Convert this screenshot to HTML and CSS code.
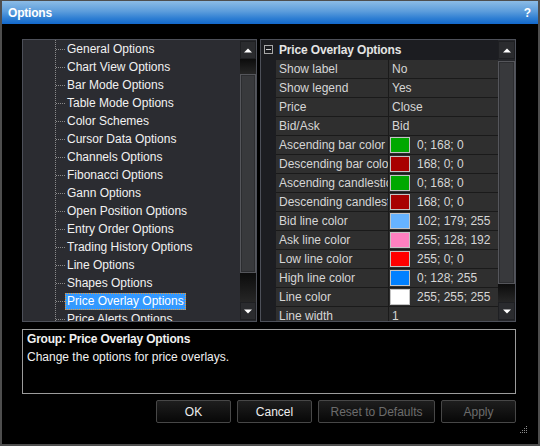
FILE: index.html
```html
<!DOCTYPE html>
<html>
<head>
<meta charset="utf-8">
<link rel="stylesheet" href="styles.css">
</head>
<body>
<div class="window">
  <div class="titlebar">
    <span class="title">Options</span>
    <span class="help">?</span>
  </div>
  <div class="content">
    <div class="panels">
      <div class="tree-panel">
        <div class="tree">
          <div class="item"><span class="label">General Options</span></div>
          <div class="item"><span class="label">Chart View Options</span></div>
          <div class="item"><span class="label">Bar Mode Options</span></div>
          <div class="item"><span class="label">Table Mode Options</span></div>
          <div class="item"><span class="label">Color Schemes</span></div>
          <div class="item"><span class="label">Cursor Data Options</span></div>
          <div class="item"><span class="label">Channels Options</span></div>
          <div class="item"><span class="label">Fibonacci Options</span></div>
          <div class="item"><span class="label">Gann Options</span></div>
          <div class="item"><span class="label">Open Position Options</span></div>
          <div class="item"><span class="label">Entry Order Options</span></div>
          <div class="item"><span class="label">Trading History Options</span></div>
          <div class="item"><span class="label">Line Options</span></div>
          <div class="item"><span class="label">Shapes Options</span></div>
          <div class="item selected"><span class="label">Price Overlay Options</span></div>
          <div class="item"><span class="label">Price Alerts Options</span></div>
        </div>
        <div class="vscroll vs-left">
          <div class="sbtn"><svg width="8" height="5" viewBox="0 0 8 5"><path d="M0 4.5 L4 0.5 L8 4.5 Z" fill="#fff"/></svg></div>
          <div class="track t1"></div>
          <div class="thumb"></div>
          <div class="track t2"></div>
          <div class="sbtn"><svg width="8" height="5" viewBox="0 0 8 5"><path d="M0 0.5 L4 4.5 L8 0.5 Z" fill="#fff"/></svg></div>
        </div>
      </div>
      <div class="grid-panel">
        <div class="grid">
          <div class="ghead">
            <span class="collapse"></span>
            <span class="ghead-text">Price Overlay Options</span>
          </div>
          <div class="row"><div class="name">Show label</div><div class="value">No</div></div>
          <div class="row"><div class="name">Show legend</div><div class="value">Yes</div></div>
          <div class="row"><div class="name">Price</div><div class="value">Close</div></div>
          <div class="row"><div class="name">Bid/Ask</div><div class="value">Bid</div></div>
          <div class="row"><div class="name">Ascending bar color</div><div class="value"><span class="swatch c-green"></span>0; 168; 0</div></div>
          <div class="row"><div class="name">Descending bar color</div><div class="value"><span class="swatch c-red"></span>168; 0; 0</div></div>
          <div class="row"><div class="name">Ascending candlestick color</div><div class="value"><span class="swatch c-green"></span>0; 168; 0</div></div>
          <div class="row"><div class="name">Descending candlestick color</div><div class="value"><span class="swatch c-red"></span>168; 0; 0</div></div>
          <div class="row"><div class="name">Bid line color</div><div class="value"><span class="swatch c-lblue"></span>102; 179; 255</div></div>
          <div class="row"><div class="name">Ask line color</div><div class="value"><span class="swatch c-pink"></span>255; 128; 192</div></div>
          <div class="row"><div class="name">Low line color</div><div class="value"><span class="swatch c-bred"></span>255; 0; 0</div></div>
          <div class="row"><div class="name">High line color</div><div class="value"><span class="swatch c-blue"></span>0; 128; 255</div></div>
          <div class="row"><div class="name">Line color</div><div class="value"><span class="swatch c-white"></span>255; 255; 255</div></div>
          <div class="row"><div class="name">Line width</div><div class="value">1</div></div>
        </div>
        <div class="vscroll vs-right">
          <div class="sbtn"><svg width="8" height="5" viewBox="0 0 8 5"><path d="M0 4.5 L4 0.5 L8 4.5 Z" fill="#fff"/></svg></div>
          <div class="track t1"></div>
          <div class="thumb"></div>
          <div class="track t2"></div>
          <div class="sbtn"><svg width="8" height="5" viewBox="0 0 8 5"><path d="M0 0.5 L4 4.5 L8 0.5 Z" fill="#fff"/></svg></div>
        </div>
      </div>
    </div>
    <div class="desc">
      <div class="desc-title">Group: Price Overlay Options</div>
      <div class="desc-text">Change the options for price overlays.</div>
    </div>
    <div class="buttons">
      <button class="btn w-std">OK</button>
      <button class="btn w-std">Cancel</button>
      <button class="btn w-wide disabled">Reset to Defaults</button>
      <button class="btn w-std disabled">Apply</button>
    </div>
  </div>
  <svg class="grip" width="8" height="8" viewBox="0 0 8 8">
    <g fill="#8a8a8a">
      <rect x="6" y="0" width="1" height="1"/>
      <rect x="4" y="2" width="1" height="1"/><rect x="6" y="2" width="1" height="1"/>
      <rect x="2" y="4" width="1" height="1"/><rect x="4" y="4" width="1" height="1"/><rect x="6" y="4" width="1" height="1"/>
      <rect x="0" y="6" width="1" height="1"/><rect x="2" y="6" width="1" height="1"/><rect x="4" y="6" width="1" height="1"/><rect x="6" y="6" width="1" height="1"/>
    </g>
  </svg>
</div>
</body>
</html>
```

FILE: styles.css
```css
* { box-sizing: border-box; }

html, body {
  margin: 0;
  padding: 0;
  background: #000;
}

body {
  font-family: "Liberation Sans", Arial, sans-serif;
  font-size: 12px;
  color: #e6e6e6;
}

.window {
  position: relative;
  width: 540px;
  height: 446px;
  border: 2px solid #4e4e4e;
  border-top-width: 1px;
  background: #000;
  overflow: hidden;
}

.titlebar {
  height: 23px;
  display: flex;
  align-items: center;
  justify-content: space-between;
  padding: 0 7px 0 6px;
  background: linear-gradient(to bottom, #8cbce6 0%, #5c9ddc 45%, #2f7fd3 75%, #1268cc 100%);
  color: #fff;
  font-weight: bold;
  font-size: 12px;
}

.title { letter-spacing: -0.2px; }
.help { font-size: 12px; }

.content {
  padding: 15px 22px 0 20px;
}

.panels {
  display: flex;
  gap: 3px;
  height: 283px;
}

/* ---------- tree panel ---------- */
.tree-panel {
  width: 235px;
  display: flex;
  border: 1px solid #4d5059;
  background: #2b2c31;
}

.tree {
  flex: 1;
  overflow: hidden;
  background-image: repeating-linear-gradient(to bottom, #8a8a8a 0 1px, transparent 1px 2px);
  background-size: 1px 100%;
  background-position: 32px 0;
  background-repeat: no-repeat;
}

.item {
  height: 18px;
  display: flex;
  align-items: center;
  white-space: nowrap;
  color: #f2f2f2;
}

.item::before {
  content: "";
  width: 9px;
  margin-left: 33px;
  border-top: 1px dotted #8a8a8a;
}

.label {
  line-height: 15px;
  padding: 0 1px;
  border: 1px dotted transparent;
}

.item.selected .label {
  background: #3399ff;
  border-color: #f09a30;
  color: #fff;
}

/* ---------- scrollbars ---------- */
.vscroll {
  display: flex;
  flex-direction: column;
  padding: 1px 0;
  background: #26272b;
}

.vs-left { width: 16px; }
.vs-right { width: 17px; }

.sbtn {
  height: 18px;
  flex: none;
  display: flex;
  align-items: center;
  justify-content: center;
  background: #2a2b2e;
  border: 1px solid #1e1f22;
}

.sbtn svg { display: block; }

.track {
  background: linear-gradient(to bottom, #0c0c0c, #262626);
}

.thumb {
  flex: none;
  background: #38393c;
  border: 1px solid #55565b;
  box-shadow: inset 0 0 0 1px #2c2d30;
}

.vs-left .t1 { height: 15px; flex: none; }
.vs-left .thumb { height: 199px; }
.vs-left .t2 { flex: 1; }

.vs-right .t1 { height: 2px; flex: none; background: #26272b; }
.vs-right .thumb { height: 223px; }
.vs-right .t2 { flex: 1; }

/* ---------- property grid ---------- */
.grid-panel {
  flex: 1;
  display: flex;
  border: 1px solid #4d5059;
  background: #1c1d21;
}

.grid {
  flex: 1;
  overflow: hidden;
  background: #1c1d21;
}

.ghead {
  height: 20px;
  display: flex;
  align-items: center;
  padding-left: 3px;
  padding-bottom: 1px;
}

.collapse {
  position: relative;
  width: 9px;
  height: 9px;
  border: 1px solid #a8a8a8;
  margin-right: 6px;
}

.collapse::after {
  content: "";
  position: absolute;
  left: 1px;
  right: 1px;
  top: 3px;
  height: 1px;
  background: #d0d0d0;
}

.ghead-text {
  font-weight: bold;
  color: #e4e4e4;
  letter-spacing: -0.15px;
}

.row {
  display: flex;
  height: 19px;
  margin-left: 15px;
  border-bottom: 1px solid #1a1a1a;
  background: #2f2f2f;
  color: #d6d6d6;
}

.name {
  width: 113px;
  flex: none;
  padding-left: 3px;
  border-right: 1px solid #1a1a1a;
  white-space: nowrap;
  overflow: hidden;
  line-height: 18px;
}

.value {
  flex: 1;
  display: flex;
  align-items: center;
  padding-left: 3px;
  white-space: nowrap;
}

.swatch {
  width: 20px;
  height: 16px;
  margin-left: -2px;
  margin-right: 7px;
  border: 1px solid #c4c4c4;
  flex: none;
}

.c-green { background: #00a800; }
.c-red { background: #a80000; }
.c-lblue { background: #66b3ff; }
.c-pink { background: #ff80c0; }
.c-bred { background: #ff0000; }
.c-blue { background: #0080ff; }
.c-white { background: #ffffff; }

/* ---------- description ---------- */
.desc {
  margin-top: 7px;
  height: 65px;
  border: 1px solid #9c9c9c;
  padding: 0 4px;
  line-height: 18px;
  color: #f0f0f0;
}

.desc-title {
  font-weight: bold;
  letter-spacing: -0.2px;
}

/* ---------- buttons ---------- */
.buttons {
  margin-top: 6px;
  display: flex;
  justify-content: flex-end;
  gap: 6px;
}

.btn {
  height: 23px;
  font-family: "Liberation Sans", Arial, sans-serif;
  font-size: 12px;
  color: #eeeeee;
  background: linear-gradient(to bottom, #1e1e1e, #070707);
  border: 1px solid #474747;
  border-radius: 2px;
  padding: 0;
}

.w-std { width: 75px; }
.w-wide { width: 117px; }

.btn.disabled { color: #6c6c6c; }

.grip {
  position: absolute;
  right: 10px;
  bottom: 10px;
}
```
